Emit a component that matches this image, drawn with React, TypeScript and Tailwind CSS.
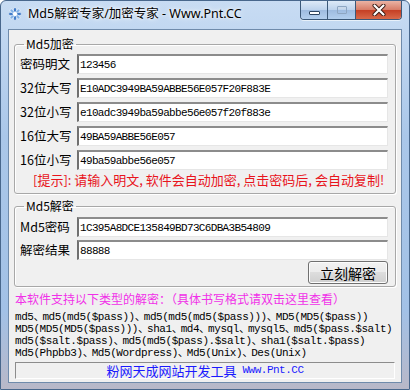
import { Fragment } from 'react';

const cjk = "font-['Noto_Sans_CJK_SC',sans-serif]";
const mono = "font-['Liberation_Mono','Noto_Sans_CJK_SC',monospace]";

const ALGOS = [
  ['md5', 'md5(md5($pass))', 'md5(md5(md5($pass)))', 'MD5(MD5($pass))'],
  ['MD5(MD5(MD5($pass)))', 'sha1', 'md4', 'mysql', 'mysql5', 'md5($pass.$salt)'],
  ['md5($salt.$pass)', 'md5(md5($pass).$salt)', 'sha1($salt.$pass)'],
  ['Md5(Phpbb3)', 'Md5(Wordpress)', 'Md5(Unix)', 'Des(Unix)'],
];

function AppIcon() {
  return (
    <svg width="14" height="14" viewBox="0 0 14 14">
      {[0, 45, 90, 135, 180, 225, 270, 315].map(a => (
        <ellipse
          key={a}
          cx="7"
          cy="3"
          rx="1.4"
          ry="2.6"
          fill={a % 90 === 0 ? '#2f6fc4' : '#7fb0e6'}
          stroke="#ffffff"
          strokeWidth="0.5"
          transform={`rotate(${a} 7 7)`}
        />
      ))}
      <circle cx="7" cy="7" r="2" fill="#ffffff" />
    </svg>
  );
}

function CaptionButtons() {
  return (
    <div className="ml-auto mr-[7px] flex h-[19px] overflow-hidden rounded-b-[4px] border border-t-0 border-[#3b5878] shadow-[0_1px_0_rgba(255,255,255,0.6)]">
      <div className="flex w-[27px] items-end justify-center border-r border-[#3b5878] bg-[linear-gradient(180deg,#dde9f7_0%,#bcd2ec_50%,#9dbbe0_50%,#b3cfee_100%)] pb-[4px]">
        <div className="h-[4px] w-[11px] rounded-[1px] border border-[#2c4460] bg-white" />
      </div>
      <div className="flex w-[28px] items-center justify-center border-r border-[#3b5878] bg-[linear-gradient(180deg,#dde9f7_0%,#bcd2ec_50%,#9dbbe0_50%,#b3cfee_100%)]">
        <div className="h-[8px] w-[10px] rounded-[1px] border border-[#8ea6c2] bg-transparent shadow-[inset_0_2px_0_#c9d8ea]" />
      </div>
      <div className="flex w-[45px] items-center justify-center bg-[linear-gradient(180deg,#eab3a4_0%,#d77b66_50%,#c43e23_50%,#d8694a_100%)]">
        <svg width="14" height="12" viewBox="0 0 14 12">
          <path d="M2.5 1.5 L11.5 10.5 M11.5 1.5 L2.5 10.5" stroke="#3a1a12" strokeWidth="4" strokeLinecap="round" />
          <path d="M2.5 1.5 L11.5 10.5 M11.5 1.5 L2.5 10.5" stroke="#ffffff" strokeWidth="2.2" strokeLinecap="round" />
        </svg>
      </div>
    </div>
  );
}

function Field({ value }: { value: string }) {
  return (
    <input
      readOnly
      value={value}
      className={`h-[20px] min-w-0 flex-1 border-t-2 border-l-2 border-r border-b border-t-[#8c8c8c] border-l-[#707070] border-r-[#e6e6e6] border-b-[#e6e6e6] bg-white px-[1px] text-[11px] leading-none tracking-[-0.66px] text-black outline-none ${mono}`}
    />
  );
}

function Row({ label, value }: { label: string; value: string }) {
  return (
    <div className="flex h-[20px] items-center">
      <span className={`w-[57px] text-[12.5px] leading-none text-black ${cjk}`}>{label}</span>
      <Field value={value} />
    </div>
  );
}

export default function App() {
  return (
    <div className="flex h-[390px] w-[410px] flex-col overflow-hidden rounded-t-[6px] border border-[#48678c] bg-[linear-gradient(180deg,#c8dcf3_0%,#aac7e9_35%,#a2c1e6_80%,#b8b8c8_100%)]">
      {/* title bar */}
      <div className="flex h-[28px] shrink-0 items-start">
        <div className="ml-[7px] mt-[6px]">
          <AppIcon />
        </div>
        <span className="ml-[6px] mt-[5px] text-[12.5px] leading-[16px] text-black [text-shadow:0_0_6px_#ffffff,0_0_3px_#ffffff] font-['Noto_Sans','Noto_Sans_CJK_SC',sans-serif]">
          Md5解密专家/加密专家 - Www.Pnt.CC
        </span>
        <CaptionButtons />
      </div>

      {/* client area */}
      <div className="mx-[7px] flex h-[354px] shrink-0 flex-col overflow-hidden border border-[#6f8bab] bg-[#f0f0f0] px-[5px] pt-[6px]">
        <fieldset className="rounded-[3px] border border-[#a8a8a8] pb-[5px] pl-[5px] pr-[7px] shadow-[inset_1px_1px_0_#ffffff,1px_1px_0_#ffffff]">
          <legend className={`ml-[4px] px-[2px] text-[12px] leading-[16px] text-black ${cjk}`}>Md5加密</legend>
          <div className="mt-[2px] flex flex-col gap-[4px]">
            <Row label="密码明文" value="123456" />
            <Row label="32位大写" value="E10ADC3949BA59ABBE56E057F20F883E" />
            <Row label="32位小写" value="e10adc3949ba59abbe56e057f20f883e" />
            <Row label="16位大写" value="49BA59ABBE56E057" />
            <Row label="16位小写" value="49ba59abbe56e057" />
          </div>
          <div className={`ml-[13px] mt-[2px] whitespace-nowrap text-[13px] leading-[16px] text-[#e8141c] ${cjk}`}>
            [提示]: 请输入明文, 软件会自动加密, 点击密码后, 会自动复制!
          </div>
        </fieldset>

        <fieldset className="mt-[4px] rounded-[3px] border border-[#a8a8a8] pb-[2px] pl-[5px] pr-[7px] shadow-[inset_1px_1px_0_#ffffff,1px_1px_0_#ffffff]">
          <legend className={`ml-[4px] px-[2px] text-[12px] leading-[16px] text-black ${cjk}`}>Md5解密</legend>
          <div className="mt-[3px] flex flex-col gap-[3px]">
            <Row label="Md5密码" value="1C395A8DCE135849BD73C6DBA3B54809" />
            <Row label="解密结果" value="88888" />
          </div>
          <div className="mt-[1px] flex justify-end">
            <button
              className={`h-[23px] w-[80px] rounded-[3px] border border-[#707070] bg-[linear-gradient(180deg,#f2f2f2_0%,#ebebeb_50%,#dddddd_50%,#cfcfcf_100%)] text-[14px] leading-none text-black shadow-[inset_0_0_0_1px_#fcfcfc] ${cjk}`}
            >
              立刻解密
            </button>
          </div>
        </fieldset>

        <div className={`ml-px mt-[4px] whitespace-nowrap text-[12px] leading-[16px] text-[#f030e8] ${cjk}`}>
          本软件支持以下类型的解密：（具体书写格式请双击这里查看）
        </div>

        <div className="ml-px mt-[4px] flex flex-col">
          {ALGOS.map((parts, li) => (
            <div key={li} className={`flex h-[12px] items-center whitespace-nowrap text-[11px] leading-[12px] tracking-[-0.45px] text-black ${mono}`}>
              {parts.map((p, i) => (
                <Fragment key={i}>
                  {i > 0 && <span className="w-[9px] shrink-0 text-center">、</span>}
                  <span>{p}</span>
                </Fragment>
              ))}
            </div>
          ))}
        </div>

        <div className="mx-px mt-[3px] flex h-[17px] shrink-0 items-center justify-center gap-[6px] border border-t-[#8c8c8c] border-l-[#8c8c8c] border-r-white border-b-white bg-[#f0f0f0] text-[#1a1aff]">
          <span className={`text-[13px] leading-none ${cjk}`}>粉网天成网站开发工具</span>
          <span className={`text-[11px] leading-none tracking-[-0.5px] ${mono}`}>Www.Pnt.CC</span>
        </div>
      </div>
    </div>
  );
}
